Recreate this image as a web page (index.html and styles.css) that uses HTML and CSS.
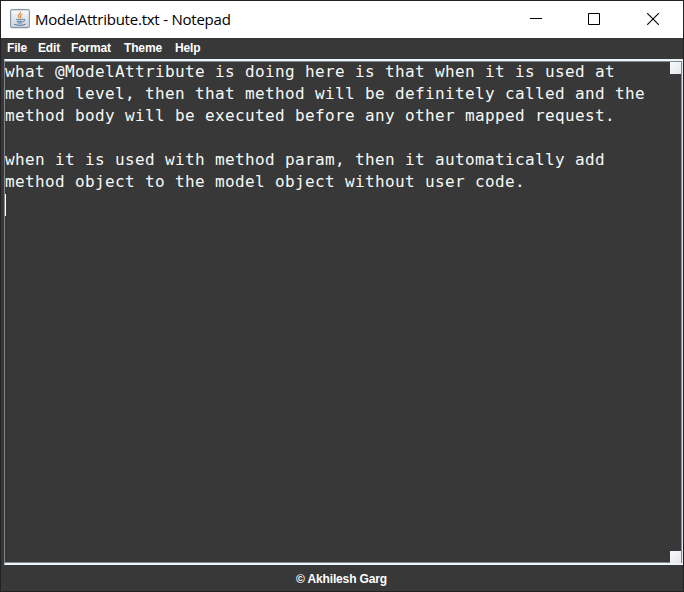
FILE: index.html
```html
<!DOCTYPE html>
<html lang="en">
<head>
<meta charset="utf-8">
<title>ModelAttribute.txt - Notepad</title>
<link rel="stylesheet" href="styles.css">
</head>
<body>
<div class="window">
  <header class="titlebar">
    <svg class="app-icon" width="20" height="20" viewBox="0 0 20 20" fill="none">
      <defs><linearGradient id="tile" x1="0" y1="0" x2="0" y2="1"><stop offset="0" stop-color="#fafbfc"/><stop offset="1" stop-color="#c9d1db"/></linearGradient></defs>
      <rect x=".6" y=".6" width="18.8" height="18" rx="1.6" fill="url(#tile)" stroke="#8495a8" stroke-width="1.1"/>
      <path d="M10.3 2.8c1 1.900-2.400 2.500-2.100 4.200.1.800 1 1.300 1.100 2.200M12.500 5.200c-1.900.9-2.600 1.500-1.900 2.600.4.700.2 1.100-.3 1.600" stroke="#d98a48" stroke-width="1.200"/>
      <path d="M6.200 10.200c1.400.7 5.200.7 6.600 0M6.800 12c1.300.7 4.500.7 5.800 0M7.300 13.700c1.200.5 3.800.5 5 0M13.200 10.300c2.300-.5 2.300 1.600-.1 2.400M4.200 15.300c2.800 1.400 8.800 1.300 11.300-.1" stroke="#52779d" stroke-width="1"/>
    </svg>
    <h1 class="title">ModelAttribute.txt - Notepad</h1>
    <div class="controls">
      <svg width="13" height="12" viewBox="0 0 13 12"><path d="M1 5.500h12" stroke="#000"/></svg>
      <svg width="12" height="12" viewBox="0 0 12 12"><path d="M.5.500h11v11H.5z" fill="none" stroke="#000"/></svg>
      <svg class="close" width="12" height="12" viewBox="0 0 12 12"><path d="M.2.200l11.600 11.600M11.800.200L.2 11.800" stroke="#000" stroke-width="1.100"/></svg>
    </div>
  </header>
  <nav class="menubar"><span>File</span><span>Edit</span><span>Format</span><span>Theme</span><span>Help</span></nav>
  <main class="editor">
    <div class="text">what @ModelAttribute is doing here is that when it is used at
method level, then that method will be definitely called and the
method body will be executed before any other mapped request.

when it is used with method param, then it automatically add
method object to the model object without user code.
<span class="caret"></span></div>
    <div class="scrollbar"><i class="arrow"></i><i class="arrow"></i></div>
  </main>
  <footer class="footer">© Akhilesh Garg</footer>
</div>
</body>
</html>
```

FILE: styles.css
```css
* { box-sizing: border-box; }
body { margin: 0; background: #383838; }
.window {
  width: 684px;
  height: 592px;
  display: flex;
  flex-direction: column;
  border: 1px solid #242024;
  background: #383838;
  overflow: hidden;
}
.titlebar {
  height: 37px;
  flex: none;
  display: flex;
  align-items: center;
  padding: 0 24px 1px 9px;
  background: #fff;
}
.app-icon { flex: none; }
.title {
  margin: 0 0 0 5px;
  font: 400 15px/20px "Open Sans", "Noto Sans", sans-serif;
  letter-spacing: -0.23px;
  color: #000;
  white-space: nowrap;
}
.controls { display: flex; gap: 46px; margin-left: auto; }
.controls svg { display: block; }
.controls .close { margin-left: 1px; }
.menubar {
  height: 21px;
  flex: none;
  display: grid;
  grid-template-columns: 31px 33px 53px 51px auto;
  padding: 0 6px;
  font: 700 12px/21px "Liberation Sans", Arial, sans-serif;
  letter-spacing: -0.15px;
  color: #fff;
}
.editor {
  flex: 1;
  display: flex;
  margin: 0 0 0 3px;
  border-style: solid;
  border-width: 2px 1px 2px 1px;
  border-color: #eef3f6 #dce5ec #eef3f6 #7d858c;
  box-shadow: inset 0 1px #7d8a95, inset -1px -1px #7d8a95;
}
.text {
  flex: 1;
  white-space: pre;
  font: 16px/22px "DejaVu Sans Mono", monospace;
  letter-spacing: 0.368px;
  color: #f8f8f5;
}
.caret {
  display: inline-block;
  width: 1px;
  height: 22px;
  margin-top: 1px;
  background: #fff;
  vertical-align: top;
}
.scrollbar {
  width: 12px;
  flex: none;
  display: flex;
  flex-direction: column;
  justify-content: space-between;
  padding: 1px 1px 0 0;
}
.arrow {
  height: 12px;
  background: linear-gradient(135deg, #fafafa, #e2e5e8);
}
.footer {
  height: 26px;
  flex: none;
  padding-right: 1px;
  font: 700 12px/28px "Liberation Sans", Arial, sans-serif;
  letter-spacing: -0.15px;
  color: #fff;
  text-align: center;
}
```
